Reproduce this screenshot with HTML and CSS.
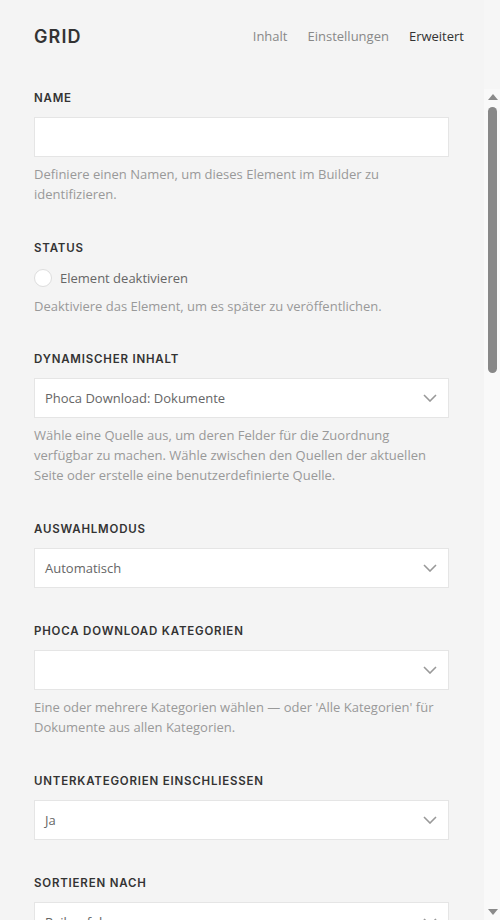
FILE: index.html
```html
<!DOCTYPE html>
<html lang="de">
<head>
<meta charset="utf-8">
<title>Grid</title>
<link rel="stylesheet" href="styles.css">
</head>
<body>
<div class="page">
  <div class="panel">
    <header class="header">
      <h1 class="title">GRID</h1>
      <nav class="tabs">
        <span class="tab">Inhalt</span>
        <span class="tab">Einstellungen</span>
        <span class="tab active">Erweitert</span>
      </nav>
    </header>

    <div class="fields">
      <section class="field">
        <div class="label">Name</div>
        <div class="input"></div>
        <p class="desc">Definiere einen Namen, um dieses Element im Builder zu identifizieren.</p>
      </section>

      <section class="field">
        <div class="label">Status</div>
        <label class="check">
          <span class="radio"></span>
          <span class="check-text">Element deaktivieren</span>
        </label>
        <p class="desc">Deaktiviere das Element, um es später zu veröffentlichen.</p>
      </section>

      <section class="field">
        <div class="label">Dynamischer Inhalt</div>
        <div class="select"><span class="value">Phoca Download: Dokumente</span><svg class="chev" width="14" height="8" viewBox="0 0 14 8"><path d="M1 1l6 6 6-6" fill="none" stroke="#999" stroke-width="1.6"/></svg></div>
        <p class="desc">Wähle eine Quelle aus, um deren Felder für die Zuordnung verfügbar zu machen. Wähle zwischen den Quellen der aktuellen Seite oder erstelle eine benutzerdefinierte Quelle.</p>
      </section>

      <section class="field">
        <div class="label">Auswahlmodus</div>
        <div class="select"><span class="value">Automatisch</span><svg class="chev" width="14" height="8" viewBox="0 0 14 8"><path d="M1 1l6 6 6-6" fill="none" stroke="#999" stroke-width="1.6"/></svg></div>
      </section>

      <section class="field">
        <div class="label">Phoca Download Kategorien</div>
        <div class="select"><span class="value"></span><svg class="chev" width="14" height="8" viewBox="0 0 14 8"><path d="M1 1l6 6 6-6" fill="none" stroke="#999" stroke-width="1.6"/></svg></div>
        <p class="desc">Eine oder mehrere Kategorien wählen — oder 'Alle Kategorien' für Dokumente aus allen Kategorien.</p>
      </section>

      <section class="field">
        <div class="label">Unterkategorien einschliessen</div>
        <div class="select"><span class="value">Ja</span><svg class="chev" width="14" height="8" viewBox="0 0 14 8"><path d="M1 1l6 6 6-6" fill="none" stroke="#999" stroke-width="1.6"/></svg></div>
      </section>

      <section class="field">
        <div class="label">Sortieren nach</div>
        <div class="select"><span class="value">Reihenfolge</span><svg class="chev" width="14" height="8" viewBox="0 0 14 8"><path d="M1 1l6 6 6-6" fill="none" stroke="#999" stroke-width="1.6"/></svg></div>
      </section>
    </div>
  </div>

  <div class="scrollbar">
    <div class="sb-top"></div>
    <div class="sb-track">
      <svg class="sb-arrow" width="10" height="6" viewBox="0 0 10 6"><path d="M5 0L10 6H0z" fill="#8a8a8a"/></svg>
      <div class="sb-thumb"></div>
      <div class="sb-rest"></div>
      <svg class="sb-arrow" width="10" height="6" viewBox="0 0 10 6"><path d="M0 0H10L5 6z" fill="#8a8a8a"/></svg>
    </div>
  </div>
</div>
</body>
</html>
```

FILE: styles.css
```css
* { box-sizing: border-box; }

html, body {
  margin: 0;
  padding: 0;
  height: 920px;
  overflow: hidden;
  background: #f4f4f4;
}

body {
  font-family: "Open Sans", "Liberation Sans", sans-serif;
  font-size: 13px;
  color: #666;
}

.page {
  display: flex;
  height: 920px;
}

.panel {
  flex: 1;
  padding: 0 35px 0 34px;
  overflow: hidden;
}

.header {
  display: flex;
  align-items: center;
  justify-content: space-between;
  height: 72px;
}

.title {
  margin: 0;
  font-family: Inter, "DejaVu Sans", sans-serif;
  font-weight: 600;
  font-size: 18px;
  letter-spacing: 1.1px;
  color: #333;
}

.tabs {
  display: flex;
  gap: 20px;
  font-size: 13px;
  margin-right: -15px;
}

.tab { color: #888; }
.tab.active { color: #333; }

.fields {
  padding-top: 19px;
  width: 415px;
}

.field + .field { margin-top: 36.5px; }

.label {
  font-family: Inter, "DejaVu Sans", sans-serif;
  font-weight: 600;
  font-size: 11.5px;
  line-height: 14px;
  letter-spacing: 0.8px;
  text-transform: uppercase;
  color: #333;
  margin-bottom: 12px;
}

.input, .select {
  height: 40px;
  background: #fff;
  border: 1px solid #e5e5e5;
}

.select {
  display: flex;
  align-items: center;
  justify-content: space-between;
  padding: 0 11px 0 10px;
  color: #666;
}

.chev { display: block; }

.desc {
  margin: 7px 0 0;
  font-size: 13px;
  line-height: 20px;
  color: #999;
}

.check {
  display: flex;
  align-items: center;
  gap: 8px;
  height: 22px;
  color: #666;
}

.radio {
  width: 18px;
  height: 18px;
  border-radius: 50%;
  background: #fff;
  border: 1px solid #ddd;
}

.scrollbar {
  width: 16px;
  flex: none;
  display: flex;
  flex-direction: column;
  background: #f6f6f6;
}

.sb-top { height: 89px; }

.sb-track {
  flex: 1;
  display: flex;
  flex-direction: column;
  align-items: center;
  background: #f9f9f9;
  padding: 5px 0 5px;
}

.sb-arrow { display: block; margin-left: 1px; }

.sb-thumb {
  margin-top: 7px;
  width: 9px;
  height: 266px;
  border-radius: 5px;
  background: #888;
  margin-left: 1px;
}

.sb-rest { flex: 1; }
```
